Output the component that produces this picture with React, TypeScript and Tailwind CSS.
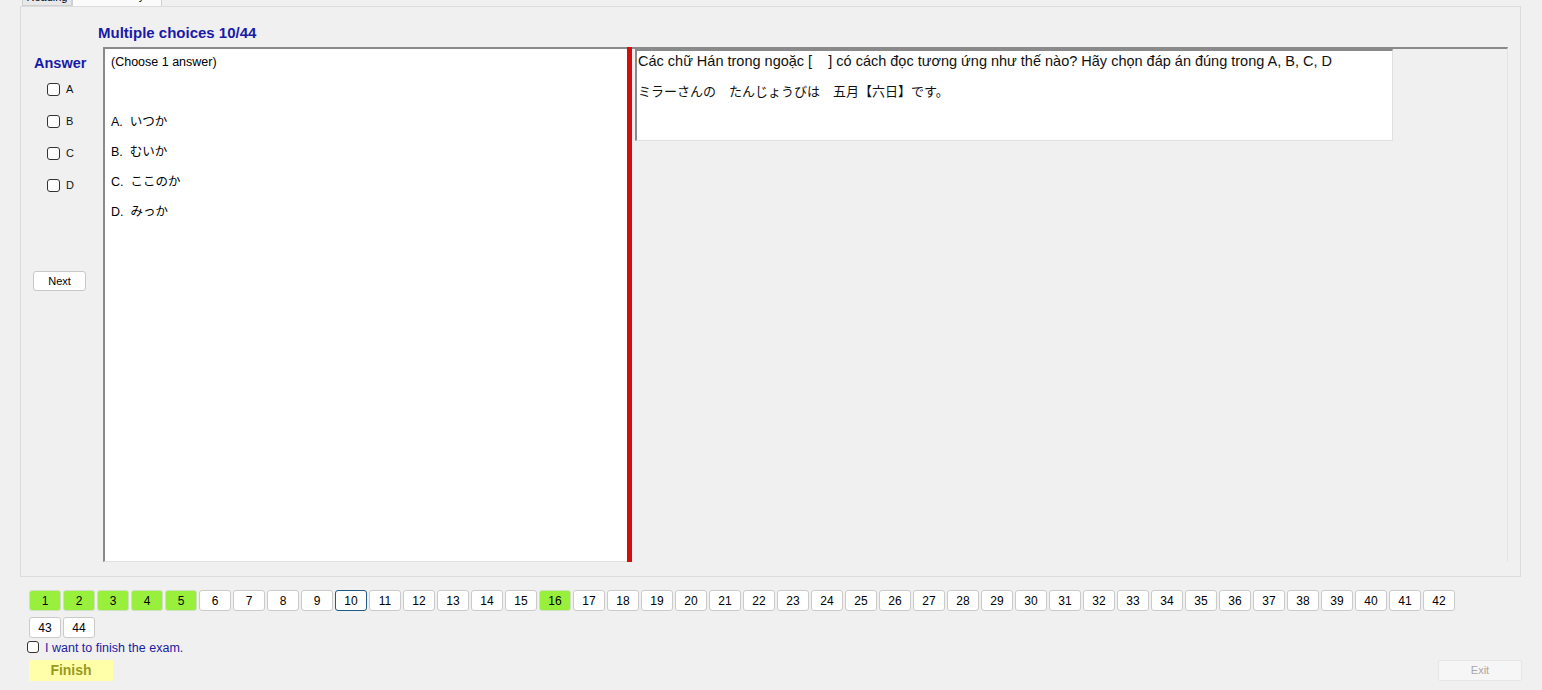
import React from 'react';

const font = { fontFamily: '"Liberation Sans", Arial, "Noto Sans CJK JP", sans-serif' };

const done = [1, 2, 3, 4, 5, 16];

function Check({ label }: { label?: string }) {
    return (
        <div className="flex items-center gap-[6px] h-[14px]">
            <div className="w-[13px] h-[13px] rounded-[3px] border border-[#333] bg-white" />
            {label && <span className="text-[11px] text-[#111]">{label}</span>}
        </div>
    );
}

export default function App() {
    const nums = Array.from({ length: 44 }, (_, i) => i + 1);

    return (
        <div className="w-[1542px] h-[690px] bg-[#f0f0f0] overflow-hidden text-black" style={font}>
            {/* tab headers, cut off at top */}
            <div className="h-[6px] overflow-hidden flex items-end pl-[22px]">
                <div className="w-[50px] h-[18px] bg-[#e8e8e8] border border-[#d0d0d0] flex items-end justify-center text-[11px] leading-[14px] pb-[1px]">
                    Reading
                </div>
                <div className="w-[90px] h-[20px] bg-[#fbfbfb] border border-[#d0d0d0] border-b-0 flex items-end justify-center text-[11px] leading-[14px] pb-[3px]">
                    Vocabulary
                </div>
            </div>

            {/* tab page */}
            <div className="ml-[20px] w-[1501px] h-[571px] border border-[#dcdcdc] bg-[#f0f0f0]">
                <div className="pl-[77px] pt-[17px] h-[40px] text-[15px] font-bold text-[#1a1aa8] leading-[17px]">
                    Multiple choices 10/44
                </div>
                <div className="flex">
                    {/* answers column */}
                    <div className="w-[82px] flex flex-col">
                        <div className="pl-[13px] pt-[8px] text-[14.5px] font-bold text-[#1a1aa8] leading-[17px]">Answer</div>
                        <div className="pl-[26px] pt-[10px] flex flex-col gap-[18px]">
                            <Check label="A" />
                            <Check label="B" />
                            <Check label="C" />
                            <Check label="D" />
                        </div>
                        <div className="pl-[12px] pt-[76px]">
                            <button className="w-[53px] h-[20px] bg-white border border-[#c8c8c8] rounded-[3px] text-[11px] leading-[18px]">
                                Next
                            </button>
                        </div>
                    </div>

                    {/* options box */}
                    <div className="w-[524px] h-[515px] bg-white border-l-2 border-t-2 border-[#8a8a8a] border-b border-b-[#e0e0e0] pl-[6px]">
                        <div className="pt-[5px] text-[12.5px] leading-[16px]">(Choose 1 answer)</div>
                        <div className="pt-[44px] flex flex-col gap-[14px] text-[12.5px] leading-[16px]">
                            <div>A.&nbsp; いつか</div>
                            <div>B.&nbsp; むいか</div>
                            <div>C.&nbsp; ここのか</div>
                            <div>D.&nbsp; みっか</div>
                        </div>
                    </div>

                    {/* splitter */}
                    <div className="w-[5px] h-[515px] bg-[#d40d0d]" />

                    {/* question pane */}
                    <div className="w-[876px] h-[515px] border-t-2 border-[#8a8a8a] border-r border-r-[#e4e4e4] pl-[3px]">
                        <div className="w-[758px] h-[92px] bg-white border-l-2 border-t-2 border-[#8a8a8a] border-b border-r border-b-[#e0e0e0] border-r-[#e0e0e0] pl-[1px]">
                            <div className="pt-[1px] text-[14.5px] leading-[18px] text-[#111]">
                                Các chữ Hán trong ngoặc [&nbsp;&nbsp;&nbsp; ] có cách đọc tương ứng như thế nào? Hãy chọn đáp án đúng trong A, B, C, D
                            </div>
                            <div className="pt-[13px] text-[13px] leading-[18px] text-[#111]">
                                ミラーさんの　たんじょうびは　五月【六日】です。
                            </div>
                        </div>
                    </div>
                </div>
            </div>

            {/* question numbers */}
            <div className="ml-[29px] mt-[13px] w-[1430px] flex flex-wrap gap-x-[2px] gap-y-[6px]">
                {nums.map((n) => (
                    <div
                        key={n}
                        className={
                            n === 10
                                ? 'w-[32px] h-[21px] rounded-[3px] bg-white border border-[#1f5a8c] text-[12px] flex items-center justify-center'
                                : done.includes(n)
                                ? 'w-[32px] h-[21px] rounded-[3px] bg-[#99f03c] border border-[#cfe0c0] text-[12px] flex items-center justify-center'
                                : 'w-[32px] h-[21px] rounded-[3px] bg-white border border-[#cacaca] text-[12px] flex items-center justify-center'
                        }
                    >
                        {n}
                    </div>
                ))}
            </div>

            <div className="ml-[27px] mt-[-1px] flex items-center gap-[6px]">
                <div className="w-[12px] h-[12px] rounded-[3px] border border-[#333] bg-white" />
                <span className="text-[12.5px] leading-[16px] text-[#1c1ca0] mt-[3px]">I want to finish the exam.</span>
            </div>

            <div className="mt-[4px] ml-[29px] mr-[20px] flex justify-between">
                <button className="w-[84px] h-[21px] bg-[#ffffaa] text-[14px] font-bold text-[#9a9a1a]">Finish</button>
                <button className="w-[84px] h-[21px] bg-[#f6f6f6] border border-[#e6e6e6] rounded-[2px] text-[11px] text-[#a8a8a8]">Exit</button>
            </div>
        </div>
    );
}
